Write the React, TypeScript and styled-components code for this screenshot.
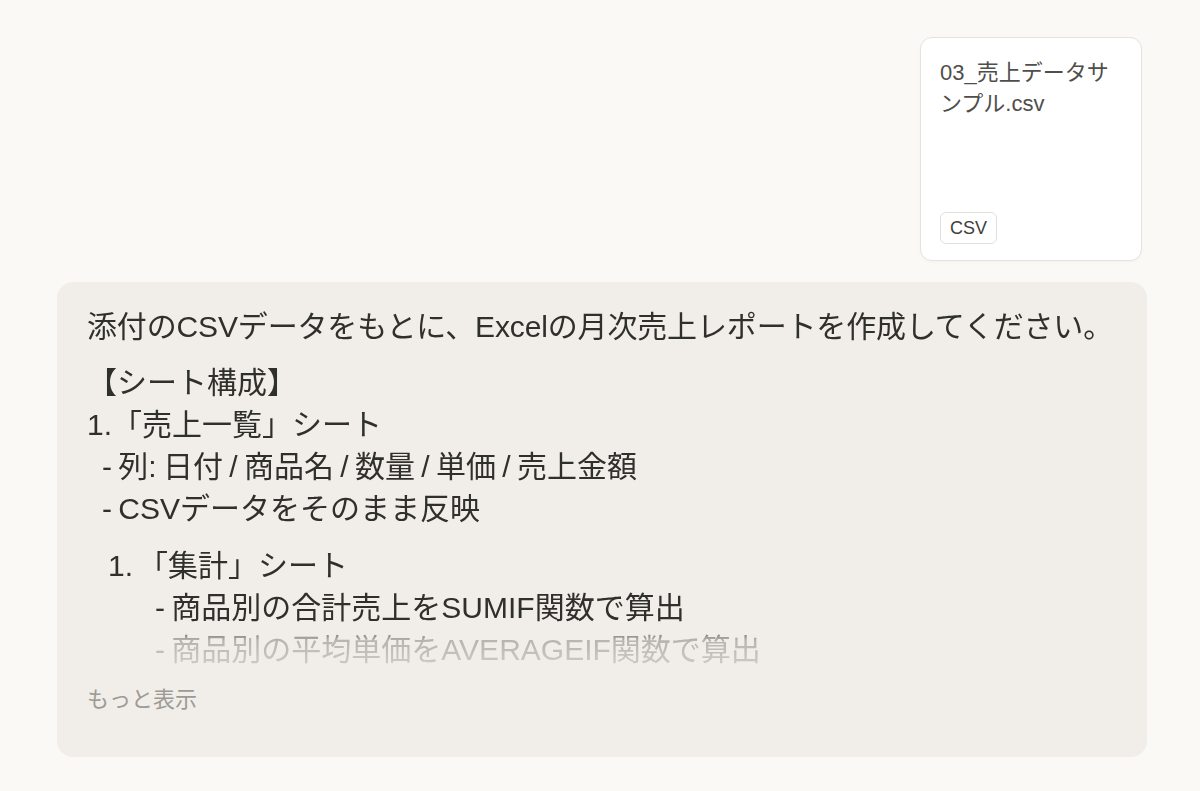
import styled, { createGlobalStyle } from "styled-components";

const GlobalStyle = createGlobalStyle`
  body {
    margin: 0;
    background: #faf9f6;
    font-family: "Liberation Sans", "Noto Sans CJK JP", sans-serif;
  }
`;

// 「集計」シートの内訳（最後の行はフェードで隠れる）
const summaryLines = [
  "- 商品別の合計売上をSUMIF関数で算出",
  "- 商品別の平均単価をAVERAGEIF関数で算出",
];

const App = () => {
  return (
    <Page>
      <GlobalStyle />

      {/* 添付ファイル */}
      <FileCard>
        <FileName>03_売上データサンプル.csv</FileName>
        <FileBadge>CSV</FileBadge>
      </FileCard>

      {/* ユーザーメッセージ */}
      <Bubble>
        <Content>
          <Paragraph>
            添付のCSVデータをもとに、Excelの月次売上レポートを作成してください。
          </Paragraph>
          <Block>
            <TextLine>【シート構成】</TextLine>
            <TextLine>1.「売上一覧」シート</TextLine>
            <TextLine $indent={15}>- 列: 日付 / 商品名 / 数量 / 単価 / 売上金額</TextLine>
            <TextLine $indent={15}>- CSVデータをそのまま反映</TextLine>
          </Block>
          <List>
            <ListItem>
              <Marker>1.</Marker>
              <ItemBody>
                <TextLine>「集計」シート</TextLine>
                {summaryLines.map((text) => (
                  <TextLine key={text} $indent={17}>
                    {text}
                  </TextLine>
                ))}
              </ItemBody>
            </ListItem>
          </List>
        </Content>
        <ShowMore>もっと表示</ShowMore>
      </Bubble>
    </Page>
  );
};

export default App;

const Page = styled.div`
  display: flex;
  flex-direction: column;
  align-items: flex-end;
  gap: 21px;
  padding: 37px 53px 0 57px;
`;

const FileCard = styled.div`
  box-sizing: border-box;
  width: 222px;
  height: 224px;
  margin-right: 5px;
  padding: 19px 19px 16px 19px;
  display: flex;
  flex-direction: column;
  justify-content: space-between;
  align-items: flex-start;
  background: #ffffff;
  border: 1px solid #e6e3dc;
  border-radius: 12px;
  box-shadow: 0 1px 3px rgba(0, 0, 0, 0.03);
`;

const FileName = styled.div`
  font-size: 22px;
  line-height: 31px;
  color: #4f4e4b;
  word-break: break-all;
`;

const FileBadge = styled.div`
  box-sizing: border-box;
  height: 32px;
  padding: 0 9px;
  display: flex;
  align-items: center;
  font-size: 18px;
  color: #3f3e3a;
  border: 1px solid #e3e0d9;
  border-radius: 6px;
`;

const Bubble = styled.div`
  box-sizing: border-box;
  align-self: stretch;
  height: 475px;
  padding: 24px 22px 0 30px;
  background: #f1eee9;
  border-radius: 16px;
`;

const Content = styled.div`
  height: 372px;
  overflow: hidden;
  color: #2f2f2c;
  font-size: 30px;
  line-height: 42px;
  word-spacing: -2px;
  -webkit-mask-image: linear-gradient(
    to bottom,
    #000 318px,
    rgba(0, 0, 0, 0.3) 334px,
    rgba(0, 0, 0, 0.12) 372px
  );
  mask-image: linear-gradient(
    to bottom,
    #000 318px,
    rgba(0, 0, 0, 0.3) 334px,
    rgba(0, 0, 0, 0.12) 372px
  );
`;

const Paragraph = styled.p`
  margin: 0 0 14px 0;
  white-space: nowrap;
  letter-spacing: -0.15px;
`;

const Block = styled.div`
  margin-bottom: 15px;
`;

const TextLine = styled.div<{ $indent?: number }>`
  padding-left: ${(p) => p.$indent ?? 0}px;
  white-space: nowrap;
`;

const List = styled.ol`
  margin: 0;
  padding: 0 0 0 21px;
  list-style: none;
`;

const ListItem = styled.li`
  display: flex;
`;

const Marker = styled.span`
  width: 30px;
  flex-shrink: 0;
`;

const ItemBody = styled.div`
  display: flex;
  flex-direction: column;
`;

const ShowMore = styled.div`
  margin-top: 8px;
  font-size: 22px;
  line-height: 28px;
  color: #9c9a95;
`;
